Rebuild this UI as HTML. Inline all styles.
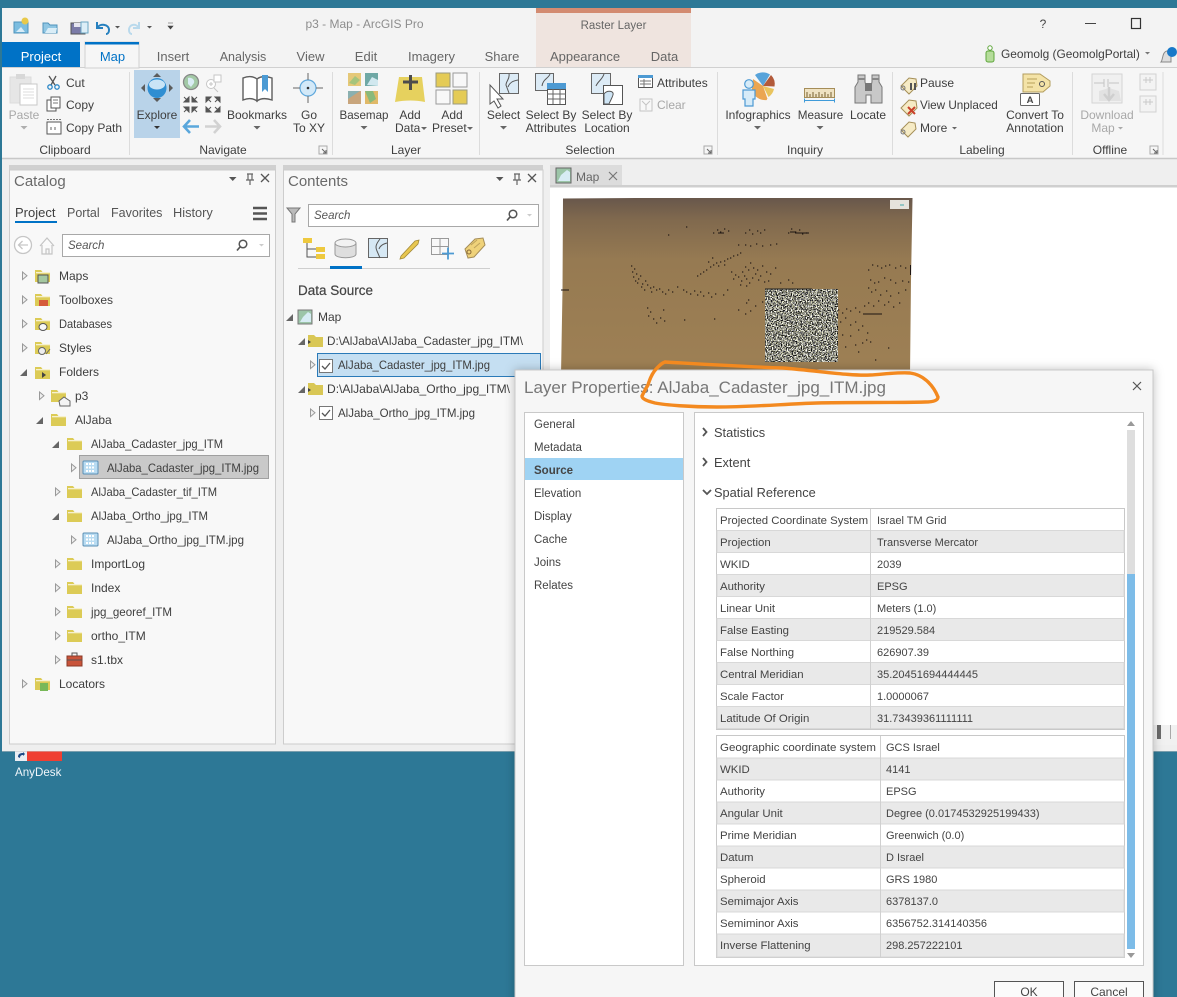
<!DOCTYPE html>
<html lang="en"><head><meta charset="utf-8"><title>p3 - Map - ArcGIS Pro</title>
<style>
html,body{margin:0;padding:0;background:#2d7896;width:1177px;height:997px;overflow:hidden}
svg{display:block}
text{font-family:"Liberation Sans",sans-serif;font-size:12px;fill:#3e3e3e;white-space:pre}
.c{text-anchor:middle}
.g{fill:#a8a8a8}
.tab{font-size:13px;fill:#666}
.h{font-size:15px;fill:#6a6a6a}
.t{font-size:11.5px;fill:#444}
.l{font-size:11.4px;fill:#444}
.v{font-size:11px;fill:#444}
.s{font-style:italic;font-size:11.5px;fill:#555}
</style></head><body>
<svg width="1177" height="997" viewBox="0 0 1177 997" xmlns="http://www.w3.org/2000/svg">
<defs>
<filter id="nz" x="0" y="0" width="100%" height="100%" color-interpolation-filters="sRGB"><feTurbulence type="fractalNoise" baseFrequency="0.8" numOctaves="2" seed="4"/><feColorMatrix type="matrix" values="3.2 .5 0 0 -1.3  3.2 .5 0 0 -1.3  2.7 .8 0 0 -1.25  0 0 0 0 1"/></filter>
<filter id="sh" x="-5%" y="-5%" width="110%" height="110%"><feDropShadow dx="0" dy="0" stdDeviation="5" flood-color="#000" flood-opacity=".25"/></filter>
<linearGradient id="mp" x1="0" y1="0" x2="0" y2="1"><stop offset="0" stop-color="#68574b"/><stop offset=".12" stop-color="#80694e"/><stop offset=".35" stop-color="#967a52"/><stop offset="1" stop-color="#9e8054"/></linearGradient>
<g id="fo"><path d="M0 1h6l1.500 2H15V13H0z" fill="#dccb56"/><path d="M1 3h14v1.300H1z" fill="#f6f1cf"/></g>
<path id="ac" d="M.5 0l4.500 3.800-4.500 3.800z" fill="#eee" stroke="#999"/>
<path id="ae" d="M7 0v7H0z" fill="#666"/>
<g id="ck"><rect x=".5" y=".5" width="13" height="13" fill="#fff" stroke="#777"/><path d="M3 7l3 3 5-6" fill="none" stroke="#555" stroke-width="1.300"/></g>
<g id="rs"><rect x="0" y="0" width="15" height="13" rx="1" fill="#b9dcf2" stroke="#5b8fb5"/><path d="M3 3h9M3 6.500h9M3 10h9" stroke="#fff" stroke-width="2" stroke-dasharray="2 1"/></g>
<path id="dn" d="M0 0h7l-3.500 3.500z" fill="#666"/>
<g id="pn"><path d="M0 0h7.500l-3.750 4z" fill="#555" transform="translate(-16 2)"/><path d="M2 -1h6M3 -1v6h4V-1M1 5h8M5 5v5" fill="none" stroke="#666" stroke-width="1.200"/><path d="M16 -1l8 8M24 -1l-8 8" stroke="#555" stroke-width="1.300"/></g>
<g id="dl"><rect x="0" y="0" width="8" height="8" fill="none" stroke="#aaa"/><path d="M3 3l4 4M7 4v3H4" stroke="#666" fill="none"/></g>
</defs>

<!-- window -->
<rect x="0" y="0" width="1177" height="997" fill="#2d7896"/>
<rect x="2" y="8" width="1175" height="743" fill="#f3f3f3"/>
<rect x="2" y="159" width="1175" height="592" fill="#efefef"/>
<rect x="2" y="67" width="1175" height="91" fill="#f6f6f6"/>
<path d="M2 67.500H85M139 67.500H1177" stroke="#d0d0d0"/>
<path d="M2 158.500H1177" stroke="#c8c8c8" stroke-width="1.500"/>

<!-- context tab -->
<rect x="536" y="8" width="155" height="59" fill="#efe4df"/>
<rect x="536" y="8" width="155" height="5" fill="#d38b71"/>
<text x="613.500" y="29" class="c" style="fill:#666;font-size:11.500px">Raster Layer</text>

<!-- QAT -->
<g>
<rect x="14" y="22" width="14" height="11" fill="#7bbde0" stroke="#4f93bb"/><circle cx="25" cy="21" r="3.500" fill="#e8c94a"/><path d="M16 32l5-5 4 5z" fill="#d8ecf7"/>
<path d="M43 23h5l2 2h7v8H43z" fill="#8fc6e3" stroke="#4f93bb"/><path d="M45 33l3-5h9l-1 5z" fill="#d9edf7"/>
<rect x="71" y="23" width="14" height="11" fill="#7b7ba8" stroke="#555"/><rect x="74" y="23" width="7" height="4" fill="#e6e6f0"/><rect x="81" y="22" width="7" height="11" fill="#dceef7" stroke="#6aa5c3"/>
<path d="M97 22v6h6M97 28c3-5 12-4 12 2 0 2-1 4-3 4" fill="none" stroke="#2680bf" stroke-width="2"/>
<path d="M115 26h5l-2.500 2.500z" fill="#555"/>
<path d="M139 22v6h-6M139 28c-3-5-10-4-10 2 0 2 1 4 3 4" fill="none" stroke="#b9d9ec" stroke-width="2"/>
<path d="M147 26h5l-2.500 2.500z" fill="#555"/>
<path d="M168 23h5M168 26h5l-2.500 3z" fill="#444" stroke="#444" stroke-width=".6"/>
</g>
<text x="364.500" y="28" class="c" style="fill:#8d8d8d;font-size:12px">p3 - Map - ArcGIS Pro</text>
<text x="1043" y="28" class="c" style="fill:#444">?</text>
<path d="M1085 23.500h11" stroke="#444"/>
<rect x="1131.500" y="18.500" width="9" height="10" fill="none" stroke="#333" stroke-width="1.200"/>

<!-- tabs -->
<rect x="2" y="42" width="78" height="25" fill="#0072c6"/>
<text x="41" y="61" class="c" style="fill:#fff;font-size:13px">Project</text>
<rect x="85" y="42" width="54" height="26" fill="#f6f6f6" stroke="#d0d0d0"/>
<rect x="85" y="42" width="54" height="2.500" fill="#0072c6"/>
<text x="112.500" y="61" class="c" style="fill:#0072c6;font-size:13px">Map</text>
<text x="173" y="61" class="c tab">Insert</text>
<text x="243" y="61" class="c tab" style="font-size:12.500px">Analysis</text>
<text x="310.500" y="61" class="c tab">View</text>
<text x="366" y="61" class="c tab">Edit</text>
<text x="431.500" y="61" class="c tab">Imagery</text>
<text x="502" y="61" class="c tab">Share</text>
<text x="585" y="61" class="c tab">Appearance</text>
<text x="664.500" y="61" class="c tab">Data</text>
<rect x="986" y="51" width="8" height="11" rx="2" fill="#b5dc9a" stroke="#5fa63c"/><circle cx="990" cy="48" r="2.200" fill="#fff" stroke="#5fa63c"/>
<text x="1001" y="58" style="font-size:11.900px">Geomolg (GeomolgPortal)</text>
<path d="M1145 52h5l-2.500 2.500z" fill="#777"/>
<path d="M1161 62c2-2 1-10 6-11h4v11z" fill="#ddd" stroke="#888"/><circle cx="1172" cy="52" r="5" fill="#1878c8"/>

<!-- ribbon separators -->
<path d="M129.500 72V155M332.500 72V155M479.500 72V155M717.500 72V155M892.500 72V155M1072.500 72V155M1163 72V155" stroke="#dcdcdc"/>
<text x="65" y="154" class="c">Clipboard</text>
<text x="223" y="154" class="c">Navigate</text>
<text x="406" y="154" class="c">Layer</text>
<text x="590" y="154" class="c">Selection</text>
<text x="805" y="154" class="c">Inquiry</text>
<text x="982" y="154" class="c">Labeling</text>
<text x="1110" y="154" class="c">Offline</text>
<use href="#dl" x="319" y="146"/><use href="#dl" x="704" y="146"/><use href="#dl" x="1150" y="146"/>

<!-- Clipboard -->
<rect x="10" y="77" width="21" height="26" fill="#e6e6e6" stroke="#dcdcdc"/><rect x="16" y="74" width="9" height="5" fill="#d8d8d8"/>
<rect x="20" y="84" width="17" height="21" fill="#fff" stroke="#c8c8c8"/><path d="M23 89h11M23 92h11M23 95h11M23 98h11" stroke="#ddd"/>
<text x="24" y="119" class="c g">Paste</text><use href="#dn" x="20.500" y="126" opacity=".5"/>
<path d="M49 76l6 9M56 76l-5 9" stroke="#555" stroke-width="1.300"/><circle cx="50" cy="87" r="2.200" fill="none" stroke="#2b87c6" stroke-width="1.300"/><circle cx="57" cy="87" r="2.200" fill="none" stroke="#2b87c6" stroke-width="1.300"/>
<text x="66" y="87">Cut</text>
<rect x="47" y="100" width="9" height="11" fill="#fff" stroke="#555"/><rect x="51" y="97" width="9" height="11" fill="#fff" stroke="#555"/><path d="M53 100h5M53 103h5" stroke="#777"/>
<text x="66" y="109">Copy</text>
<rect x="47" y="122" width="14" height="12" fill="#fff" stroke="#555"/><path d="M47 119.500h14" stroke="#777" stroke-dasharray="2 1"/><path d="M51 130v-3M55 130v-3" stroke="#666"/>
<text x="66" y="132">Copy Path</text>

<!-- Navigate -->
<rect x="134" y="70" width="46" height="68" fill="#b9d3e9"/>
<path d="M157 73l4 4h-8zM157 102l-4-4h8zM141 88l4-4v8zM173 88l-4-4v8z" fill="#5c5c5c"/>
<ellipse cx="157" cy="88" rx="9.500" ry="10" fill="#2f8ed2"/><ellipse cx="157" cy="84.500" rx="8" ry="5" fill="#c9e4f6"/>
<text x="157" y="119" class="c">Explore</text><path d="M154 126h6l-3 3z" fill="#333"/>
<circle cx="191" cy="82" r="7.500" fill="#a3c9a6" stroke="#888" stroke-width="1.300"/><path d="M188 78c4-1 7 2 6 5l-3 4-3-3z" fill="#d9ecf4"/>
<circle cx="211" cy="84" r="4.500" fill="#fff" stroke="#c6c6c6"/><path d="M214 88l4 4M209 84h4M211 82v4" stroke="#c6c6c6"/><rect x="214" y="75" width="7" height="7" fill="#fff" stroke="#c6c6c6"/>
<path d="M184 97l3 3M189 102h-5l5-5zM197 97l-3 3M192 102v-5l5 5zM184 112l3-3M189 107v5l-5-5zM197 112l-3-3M192 107h5l-5 5z" stroke="#555" fill="#555"/>
<path d="M206 97l5 0-5 5zM211 102l-3-3M220 97h-5l5 5zM215 102l3-3M206 112h5l-5-5zM211 107l-3 3M220 112h-5l5-5zM215 107l3 3" stroke="#555" fill="#555"/>
<path d="M199 126.500h-14M190 120l-6 6.500 6 6.500" fill="none" stroke="#5aa7dc" stroke-width="2.600"/>
<path d="M205 126.500h14M214 120l6 6.500-6 6.500" fill="none" stroke="#d2d2d2" stroke-width="2.600"/>
<path d="M243 78c5-2 10-2 14 1v22c-4-3-9-3-14-1zM257 79c4-3 9-3 15-1v22c-6-2-11-2-15 1z" fill="#fff" stroke="#5e5e5e" stroke-width="1.400"/>
<path d="M262 75h6v17l-3-3-3 3z" fill="#4c9bd4"/>
<text x="257" y="119" class="c">Bookmarks</text><use href="#dn" x="253.500" y="126"/>
<circle cx="308" cy="88" r="8" fill="#d3e9f8" stroke="#5fa8dc" stroke-width="1.200"/><circle cx="308" cy="88" r="1.300" fill="#333"/>
<path d="M308 73v7M308 96v7M293 88h7M316 88h7" stroke="#666"/>
<text x="309" y="119" class="c">Go</text><text x="309" y="132" class="c">To XY</text>

<!-- Layer -->
<rect x="348" y="73" width="13" height="13" fill="#e5c878"/><path d="M349 83l6-7 5 4-5 5z" fill="#a5c47c"/>
<rect x="365" y="73" width="13" height="13" fill="#6fa8a5"/><path d="M367 85l5-8 6 3v6z" fill="#d1e8ef"/>
<rect x="348" y="91" width="13" height="13" fill="#c8a57c"/><path d="M348 91h12l-12 8z" fill="#8ab0b0"/>
<rect x="365" y="91" width="13" height="13" fill="#e0b968"/><path d="M365 91h8l3 8-6 4z" fill="#89ba7c"/>
<text x="364" y="119" class="c" style="font-size:11.600px">Basemap</text><use href="#dn" x="360.500" y="126"/>
<path d="M399 77h23l3 25c-9-2-20-2-30 0z" fill="#e6d15e"/><path d="M410.500 75v15M403 82h15" stroke="#4c4c4c" stroke-width="3"/>
<text x="410" y="119" class="c">Add</text><text x="395" y="132">Data</text><path d="M421 127h6l-3 3z" fill="#666"/>
<rect x="436" y="73" width="14" height="14" fill="#e4cb56" stroke="#9a9a80"/><rect x="453" y="73" width="14" height="14" fill="#f8f8f8" stroke="#9a9a9a"/>
<rect x="436" y="90" width="14" height="14" fill="#f8f8f8" stroke="#9a9a9a"/><rect x="453" y="90" width="14" height="14" fill="#e4cb56" stroke="#9a9a80"/>
<text x="452" y="119" class="c">Add</text><text x="432" y="132">Preset</text><path d="M467 127h6l-3 3z" fill="#666"/>

<!-- Selection -->
<rect x="499.500" y="73.500" width="19" height="20" fill="#dcebf6" stroke="#666"/><path d="M509 74c1 5-3 7-3 11l3 8M518 80c-5 1-8 2-10 7" fill="none" stroke="#555"/>
<path d="M490 85v19l4-3 4 7 3-2-4-7h6z" fill="#fff" stroke="#555"/>
<text x="503.500" y="119" class="c">Select</text><use href="#dn" x="500" y="126"/>
<rect x="535.500" y="73.500" width="18" height="17" fill="#dcebf6" stroke="#666"/><path d="M550 74c-2 5-7 5-8 12" fill="none" stroke="#555"/>
<rect x="547" y="83" width="19" height="6" fill="#4d9ad3"/><rect x="547.500" y="89.500" width="18" height="15" fill="#fff" stroke="#555"/><path d="M547 94h19M547 99h19M553 89v15M560 89v15" stroke="#666"/>
<text x="551" y="119" class="c">Select By</text><text x="551" y="132" class="c">Attributes</text>
<rect x="591.500" y="73.500" width="19" height="20" fill="#dcebf6" stroke="#666"/><path d="M604 74c-2 6-6 7-8 12" fill="none" stroke="#555"/>
<rect x="603.500" y="85.500" width="19" height="19" fill="#fff" stroke="#555"/><path d="M604 94c3-4 8-3 9-1s-2 6-4 11h-5z" fill="#cfe5f5" stroke="#555"/>
<text x="607" y="119" class="c">Select By</text><text x="607" y="132" class="c">Location</text>
<rect x="638.500" y="75.500" width="14" height="12" fill="#fff" stroke="#555"/><rect x="638" y="75" width="15" height="3" fill="#4d9ad3"/><path d="M640 81h11M640 84h11M644 79v8" stroke="#777"/>
<text x="657" y="87">Attributes</text>
<rect x="640" y="99" width="12" height="12" fill="#f8f8f8" stroke="#c4c4c4"/><path d="M642 101l4 4v5M650 101l-4 4" stroke="#c4c4c4" fill="none"/>
<text x="657" y="109" class="g">Clear</text>

<!-- Inquiry -->
<path d="M763 86L755 75A13 13 0 0 1 770 74.500z" fill="#57a3da"/>
<path d="M763 86L771 75A13 13 0 0 1 774.500 86.500z" fill="#b25a3a"/>
<path d="M763 86L774 89A13 13 0 0 1 768.500 97z" fill="#e9c45e"/>
<path d="M763 86L767.500 99A13 13 0 0 1 753 81z" fill="#eba652"/>
<path d="M753 79L763 86 767 100C760 101 753 96 752 90z" fill="#eba652"/>
<circle cx="749" cy="84" r="4.300" fill="#d6ebf8" stroke="#4d9ad3" stroke-width="1.200"/><path d="M743 90h12v9h-2v7h-8v-7h-2z" fill="#d6ebf8" stroke="#4d9ad3" stroke-width="1.200"/>
<text x="758" y="119" class="c">Infographics</text><use href="#dn" x="754" y="126"/>
<rect x="804.500" y="88.500" width="30" height="9" fill="#efe2c2" stroke="#a58d58"/><path d="M807 97v-5M810 97v-3M813 97v-5M816 97v-3M819 97v-5M822 97v-3M825 97v-5M828 97v-3M831 97v-5" stroke="#776030"/>
<path d="M804 100.500h31M804.500 98.500v4M834.500 98.500v4" stroke="#3f9bd9"/>
<text x="820.500" y="119" class="c" style="font-size:11.700px">Measure</text><use href="#dn" x="816.500" y="126"/>
<path d="M858 75h7v7l1 4v3h5v-3l1-4v-7h7v7l3 5v16h-11v-8h-5v8h-11V87l3-5z" fill="#c8c8c8" stroke="#777"/><rect x="865" y="83" width="7" height="8" fill="#777"/><path d="M858 79h7M872 79h7" stroke="#888" stroke-width="2"/>
<text x="868" y="119" class="c">Locate</text>

<!-- Labeling -->
<path d="M901 86l8-8 7 1 1 7-8 8z" fill="#f6ebc5" stroke="#a58f58"/><circle cx="903" cy="88" r="2" fill="none" stroke="#777"/>
<path d="M911 83v7M915 83v7" stroke="#555" stroke-width="2"/>
<text x="920" y="87">Pause</text>
<path d="M901 108l8-8 7 1 1 7-8 8z" fill="#f6ebc5" stroke="#a58f58"/><path d="M908 107l7 7M915 107l-7 7" stroke="#c9402a" stroke-width="2"/>
<text x="920" y="109" style="font-size:11.700px">View Unplaced</text>
<path d="M901 130l8-8 6 1 1 6-8 8z" fill="#f6ebc5" stroke="#a58f58"/><circle cx="903" cy="132" r="2" fill="none" stroke="#777"/>
<text x="920" y="132">More</text><path d="M952 127h5l-2.500 2.500z" fill="#666"/>
<path d="M1023 74h17l10 7v5l-7 6h-20z" fill="#f4e3a7" stroke="#b39d5f"/><path d="M1027 79h10M1027 83h8M1027 87h6" stroke="#b8a259"/><circle cx="1042" cy="84" r="2.500" fill="none" stroke="#555"/>
<rect x="1020.500" y="93.500" width="19" height="12" rx="1" fill="#fff" stroke="#666"/><text x="1030" y="103" class="c" style="font-size:9.500px;font-weight:bold;fill:#444">A</text>
<text x="1035" y="119" class="c">Convert To</text><text x="1035" y="132" class="c">Annotation</text>

<!-- Offline -->
<rect x="1092" y="74" width="30" height="29" fill="#f0f0f0" stroke="#d4d4d4"/><path d="M1094 83h10M1109 83h10M1104 79v8M1108 79v8" stroke="#c4c4c4"/><path d="M1099 91l10-3 10 3 2 10h-22z" fill="#e2e2e2"/><path d="M1109 87v12M1104 94l5 6 5-6" stroke="#cfcfcf" stroke-width="2.500" fill="none"/>
<text x="1107" y="119" class="c g">Download</text><text x="1103" y="132" class="c g">Map</text><path d="M1118 127h5l-2.500 2.500z" fill="#aaa"/>
<rect x="1140" y="74" width="16" height="16" fill="#f3f3f3" stroke="#d2d2d2"/><rect x="1140" y="96" width="16" height="16" fill="#f3f3f3" stroke="#d2d2d2"/>
<path d="M1143 80h10M1146 77v6M1150 77v6M1143 102h10M1146 99v6M1150 99v6" stroke="#cacaca"/>

<!-- Catalog pane -->
<rect x="9" y="165" width="267" height="5" fill="#d0d0d0"/>
<rect x="9.500" y="170" width="266" height="574" fill="#f8f8f8" stroke="#cdcdcd"/>
<text x="14" y="186" class="h">Catalog</text>
<use href="#pn" x="245" y="175"/>
<text x="15" y="217" style="font-size:13px">Project</text><rect x="15" y="221" width="42" height="2" fill="#0072c6"/>
<text x="67" y="217" style="font-size:12.500px;fill:#555">Portal</text>
<text x="111" y="217" style="font-size:12.500px;fill:#555">Favorites</text>
<text x="173" y="217" style="font-size:12.800px;fill:#555">History</text>
<path d="M253 208h14M253 213.500h14M253 219h14" stroke="#555" stroke-width="2.500"/>
<circle cx="23" cy="245" r="8.500" fill="#fff" stroke="#c6c6c6" stroke-width="1.300"/><path d="M28 245h-9M22.500 241l-4 4 4 4" fill="none" stroke="#c6c6c6" stroke-width="1.300"/>
<path d="M40 246l7-8 7 8M42 245v9h10v-9M46 254v-5h3v5" fill="#fafafa" stroke="#c4c4c4" stroke-width="1.200"/>
<rect x="62.500" y="234.500" width="207" height="22" fill="#fff" stroke="#a8a8a8"/>
<text x="68" y="249" class="s">Search</text>
<circle cx="243" cy="244" r="3.800" fill="none" stroke="#555" stroke-width="1.500"/><path d="M240 247l-3 3.500" stroke="#555" stroke-width="1.700"/><path d="M259 244h5l-2.500 2.500z" fill="#ccc"/>

<!-- catalog tree -->
<use href="#ac" x="22" y="272"/><use href="#fo" x="35" y="269"/><rect x="38" y="275" width="10" height="8" fill="#a5c8a0" stroke="#555"/><text x="59" y="280">Maps</text>
<use href="#ac" x="22" y="296"/><use href="#fo" x="35" y="293"/><rect x="39" y="300" width="9" height="6" fill="#d55a3a"/><text x="59" y="304">Toolboxes</text>
<use href="#ac" x="22" y="320"/><use href="#fo" x="35" y="317"/><ellipse cx="43" cy="327" rx="4" ry="3.500" fill="#f8f8f8" stroke="#555"/><text x="59" y="328" textLength="53" lengthAdjust="spacingAndGlyphs">Databases</text>
<use href="#ac" x="22" y="344"/><use href="#fo" x="35" y="341"/><circle cx="42" cy="351" r="3.500" fill="#eee" stroke="#666"/><path d="M46 354l4-5" stroke="#666"/><text x="59" y="352">Styles</text>
<use href="#ae" x="20" y="369"/><use href="#fo" x="35" y="366"/><path d="M42 372l4 3-4 3z" fill="#444"/><text x="59" y="376">Folders</text>
<use href="#ac" x="39" y="392"/><use href="#fo" x="51" y="389"/><path d="M59 401l5-4 6 4v5H60z" fill="#f4f4f4" stroke="#666"/><text x="75" y="400">p3</text>
<use href="#ae" x="36" y="417"/><use href="#fo" x="51" y="413"/><text x="75" y="424">AlJaba</text>
<use href="#ae" x="52" y="441"/><use href="#fo" x="67" y="437"/><text x="91" y="448" textLength="132" lengthAdjust="spacingAndGlyphs">AlJaba_Cadaster_jpg_ITM</text>
<rect x="79.500" y="455.500" width="189" height="23" fill="#c9c9c9" stroke="#a0a0a0"/>
<use href="#ac" x="71" y="464"/><use href="#rs" x="83" y="461"/><text x="107" y="472" textLength="152" lengthAdjust="spacingAndGlyphs">AlJaba_Cadaster_jpg_ITM.jpg</text>
<use href="#ac" x="55" y="488"/><use href="#fo" x="67" y="485"/><text x="91" y="496" textLength="126" lengthAdjust="spacingAndGlyphs">AlJaba_Cadaster_tif_ITM</text>
<use href="#ae" x="52" y="513"/><use href="#fo" x="67" y="509"/><text x="91" y="520" textLength="117" lengthAdjust="spacingAndGlyphs">AlJaba_Ortho_jpg_ITM</text>
<use href="#ac" x="71" y="536"/><use href="#rs" x="83" y="533"/><text x="107" y="544" textLength="137" lengthAdjust="spacingAndGlyphs">AlJaba_Ortho_jpg_ITM.jpg</text>
<use href="#ac" x="55" y="560"/><use href="#fo" x="67" y="557"/><text x="91" y="568">ImportLog</text>
<use href="#ac" x="55" y="584"/><use href="#fo" x="67" y="581"/><text x="91" y="592">Index</text>
<use href="#ac" x="55" y="608"/><use href="#fo" x="67" y="605"/><text x="91" y="616" textLength="81" lengthAdjust="spacingAndGlyphs">jpg_georef_ITM</text>
<use href="#ac" x="55" y="632"/><use href="#fo" x="67" y="629"/><text x="91" y="640">ortho_ITM</text>
<use href="#ac" x="55" y="656"/><rect x="67" y="656" width="15" height="10" fill="#c9543a" stroke="#8a3a28"/><path d="M72 656v-3h5v3M67 660h15" stroke="#555" fill="none"/><text x="91" y="664">s1.tbx</text>
<use href="#ac" x="22" y="680"/><use href="#fo" x="35" y="677"/><rect x="40" y="683" width="8" height="8" fill="#78b858"/><text x="59" y="688">Locators</text>

<!-- Contents pane -->
<rect x="283" y="165" width="260" height="5" fill="#d0d0d0"/>
<rect x="283.500" y="170" width="259.500" height="574" fill="#f8f8f8" stroke="#cdcdcd"/>
<text x="288" y="186" class="h">Contents</text>
<use href="#pn" x="512" y="175"/>
<path d="M287 208h13l-5 6v8h-3v-8z" fill="#bbb" stroke="#777"/>
<rect x="308.500" y="204.500" width="230" height="22" fill="#fff" stroke="#a8a8a8"/>
<text x="314" y="219" class="s">Search</text>
<circle cx="513" cy="214" r="3.800" fill="none" stroke="#555" stroke-width="1.500"/><path d="M510 217l-3 3.500" stroke="#555" stroke-width="1.700"/><path d="M527 214h5l-2.500 2.500z" fill="#ccc"/>
<rect x="303" y="238" width="9" height="5" fill="#eec93f"/><rect x="316" y="247" width="9" height="5" fill="#eec93f"/><rect x="316" y="254" width="9" height="5" fill="#eec93f"/><path d="M307 243v14h9M307 249h9" fill="none" stroke="#555"/>
<path d="M335 243v11c0 5 21 5 21 0v-11" fill="#dedede" stroke="#999"/><ellipse cx="345.500" cy="243" rx="10.500" ry="4" fill="#f2f2f2" stroke="#999"/>
<rect x="368.500" y="238.500" width="19" height="19" fill="#d6e8f4" stroke="#666"/><path d="M380 239c-4 5-5 8-3 12l3 7M387 243c-4 1-7 3-8 6" fill="none" stroke="#555"/>
<path d="M401 256l14-15 4-1-1 4-14 14-4 1z" fill="#e8c750" stroke="#a38a3a" stroke-width=".8"/>
<path d="M431.500 238.500h17v16h-17zM431.500 246.500h17M440 238.500v16" fill="none" stroke="#999"/><path d="M442 253.500h12M448 247.500v12" stroke="#4d9ad3" stroke-width="1.800"/>
<path d="M465 249l10-10 8-1 2 7-11 12-6 1z" fill="#efd27a" stroke="#a58d58"/><circle cx="469" cy="252" r="2" fill="none" stroke="#8a6a3a"/><path d="M471 245l6-5M474 248l6-5" stroke="#bfa25c"/>
<path d="M298 268.500H490" stroke="#cfcfcf"/><rect x="330" y="266" width="32" height="3" fill="#0072c6"/>
<text x="298" y="295" style="font-size:13.500px;fill:#444;stroke:#444;stroke-width:.2">Data Source</text>
<use href="#ae" x="286" y="314"/><rect x="298" y="310" width="14" height="14" fill="#9cc5a8" stroke="#777"/><path d="M300 322l3-5 5-5 3 2v8z" fill="#d7ecf4"/><text x="318" y="321">Map</text>
<use href="#ae" x="298" y="338"/><path d="M308 335h6l2 2h7v10h-15z" fill="#d9c755"/><path d="M308 340l3 2-3 2z" fill="#444"/><text x="327" y="345" textLength="196" lengthAdjust="spacingAndGlyphs">D:\AlJaba\AlJaba_Cadaster_jpg_ITM\</text>
<rect x="317.500" y="353.500" width="223" height="23" fill="#c5dff2" stroke="#2b7ab8"/>
<use href="#ac" x="310" y="361"/><use href="#ck" x="319" y="359"/><text x="338" y="369" textLength="152" lengthAdjust="spacingAndGlyphs">AlJaba_Cadaster_jpg_ITM.jpg</text>
<use href="#ae" x="298" y="386"/><path d="M308 383h6l2 2h7v10h-15z" fill="#d9c755"/><path d="M308 388l3 2-3 2z" fill="#444"/><text x="327" y="393" textLength="183" lengthAdjust="spacingAndGlyphs">D:\AlJaba\AlJaba_Ortho_jpg_ITM\</text>
<use href="#ac" x="310" y="409"/><use href="#ck" x="319" y="406"/><text x="338" y="417" textLength="137" lengthAdjust="spacingAndGlyphs">AlJaba_Ortho_jpg_ITM.jpg</text>

<!-- Map view -->
<rect x="550" y="165" width="72" height="21" fill="#dcdcdc"/>
<rect x="556" y="168" width="15" height="15" fill="#9cc5a8" stroke="#666"/><path d="M558 181l3-6 6-5 3 2v9z" fill="#d7ecf4"/>
<text x="576" y="181" style="font-size:12px;fill:#666">Map</text>
<path d="M609 172l8 8M617 172l-8 8" stroke="#777" stroke-width="1.200"/>
<rect x="550" y="186" width="627" height="540" fill="#fff"/>
<rect x="550" y="185" width="627" height="2.500" fill="#cfcfcf"/>
<rect x="550" y="725" width="627" height="20" fill="#f1f1f1"/>
<path d="M563 198.500L641 198L912.500 198L911 280L910 375H561L562.500 290z" fill="url(#mp)"/>
<rect x="890" y="200" width="19" height="9" fill="#e6e3dc"/><path d="M900 205h4" stroke="#4aa"/>
<path d="M561 290h8M863 314h19M910.500 265v10M718 233h6M790 232h6M795 233h14" stroke="#1d1512" fill="none"/>
<path fill="none" stroke="#1d1512" stroke-width="1.300" opacity=".9" d="M631 266h1.300M634 269h1.300M632 272h1.300M636 274h1.300M633 277h1.300M638 279h1.300M635 281h1.300M640 276h1.300M637 283h1.300M642 284h1.300M645 281h1.300M641 287h1.300M647 285h1.300M650 288h1.300M644 290h1.300M653 287h1.300M656 290h1.300M659 289h1.300M662 292h1.300M651 292h1.300M665 294h1.300M668 290h1.300M697 276h1.300M700 274h1.300M703 272h1.300M706 270h1.300M710 267h1.300M713 265h1.300M716 263h1.300M720 262h1.300M724 261h1.300M727 259h1.300M730 258h1.300M733 256h1.300M737 255h1.300M740 253h1.300M708 262h1.300M712 258h1.300M718 266h1.300M724 265h1.300M731 272h1.300M735 275h1.300M733 279h1.300M738 277h1.300M741 281h1.300M744 276h1.300M746 279h1.300M749 283h1.300M752 278h1.300M755 274h1.300M758 280h1.300M742 272h1.300M748 270h1.300M753 268h1.300M757 270h1.300M762 266h1.300M766 272h1.300M760 276h1.300M770 274h1.300M775 268h1.300M764 282h1.300M740 285h1.300M746 286h1.300M768 281h1.300M780 283h1.300M788 280h1.300M792 283h1.300M745 267h1.300M750 263h1.300M683 290h1.300M686 292h1.300M690 294h1.300M694 291h1.300M697 295h1.300M700 292h1.300M703 296h1.300M708 293h1.300M711 297h1.300M715 294h1.300M677 287h1.300M672 292h1.300M723 295h1.300M727 290h1.300M713 233h1.300M717 230h1.300M720 232h1.300M724 229h1.300M728 231h1.300M745 233h1.300M749 230h1.300M752 234h1.300M757 231h1.300M760 233h1.300M764 230h1.300M788 233h1.300M791 229h1.300M795 232h1.300M799 230h1.300M802 234h1.300M806 233h1.300M738 245h1.300M745 245h1.300M750 246h1.300M756 244h1.300M762 246h1.300M770 245h1.300M776 244h1.300M686 227h1.300M668 235h1.300M647 308h1.300M650 312h1.300M648 316h1.300M653 319h1.300M656 323h1.300M660 318h1.300M664 321h1.300M663 310h1.300M684 320h1.300M714 319h1.300M750 311h1.300M746 303h1.300M738 310h1.300M745 314h1.300M755 306h1.300M748 300h1.300M762 302h1.300M868 270h1.300M872 265h1.300M877 266h1.300M881 268h1.300M885 266h1.300M889 265h1.300M895 268h1.300M900 266h1.300M905 268h1.300M870 280h1.300M874 283h1.300M868 288h1.300M878 282h1.300M884 278h1.300M890 280h1.300M895 283h1.300M902 281h1.300M908 282h1.300M871 292h1.300M875 290h1.300M880 295h1.300M886 291h1.300M890 296h1.300M898 293h1.300M905 290h1.300M868 303h1.300M873 306h1.300M878 301h1.300M884 305h1.300M888 302h1.300M893 307h1.300M899 303h1.300M838 310h1.300M842 313h1.300M846 309h1.300M850 311h1.300M855 308h1.300M859 312h1.300M864 306h1.300M845 318h1.300M850 325h1.300M855 322h1.300M858 330h1.300M862 326h1.300M867 333h1.300M850 336h1.300M855 345h1.300M862 343h1.300M866 340h1.300M870 342h1.300M888 348h1.300M842 335h1.300M840 322h1.300M875 360h1.300M858 352h1.300M845 347h1.300"/>
<svg x="765" y="289" width="73" height="73"><rect width="73" height="73" filter="url(#nz)"/></svg>
<path d="M765 289h47" stroke="#222" stroke-width="1"/>

<!-- AnyDesk -->
<rect x="15" y="751" width="12" height="10" fill="#e9edf3"/><path d="M18 757c0-3 2-4 5-4v-1l2 2-2 2v-1c-2 0-3 1-3 3z" fill="#1d4a86"/>
<rect x="27" y="751" width="35" height="10" fill="#ef3f32"/>
<text x="15" y="776" style="fill:#f0f6fa;font-size:11.600px">AnyDesk</text>

<!-- status marks -->
<rect x="1157" y="725" width="4" height="14" fill="#6a6a6a"/><path d="M1170.500 725v14" stroke="#a8a8a8"/>
<path d="M2 751.500H1177" stroke="#c4c4c4" opacity=".5"/>

<!-- Dialog -->
<rect x="515" y="370" width="638" height="640" fill="#f6f6f6" stroke="#c9c9c9" filter="url(#sh)"/>
<text x="524" y="393" style="font-size:17px;fill:#777">Layer Properties: AlJaba_Cadaster_jpg_ITM.jpg</text>
<path d="M1133 382l8 8M1141 382l-8 8" stroke="#555" stroke-width="1.200"/>
<rect x="524.500" y="412.500" width="159" height="553" fill="#fff" stroke="#c9c9c9"/>
<rect x="525" y="458" width="158" height="22" fill="#9fd3f3"/>
<text x="534" y="428" class="t">General</text>
<text x="534" y="451" class="t">Metadata</text>
<text x="534" y="474" class="t" style="font-weight:bold">Source</text>
<text x="534" y="497" class="t">Elevation</text>
<text x="534" y="520" class="t">Display</text>
<text x="534" y="543" class="t">Cache</text>
<text x="534" y="566" class="t">Joins</text>
<text x="534" y="589" class="t">Relates</text>
<rect x="694.500" y="412.500" width="449" height="553" fill="#fff" stroke="#c9c9c9"/>
<path d="M703 428l3.500 4-3.500 4M703 458l3.500 4-3.500 4" fill="none" stroke="#555" stroke-width="1.800"/>
<path d="M703 490l4 4 4-4" fill="none" stroke="#555" stroke-width="1.800"/>
<text x="714" y="437" style="font-size:12.800px;fill:#444">Statistics</text>
<text x="714" y="467" style="font-size:12.800px;fill:#444">Extent</text>
<text x="714" y="497" style="font-size:12.800px;fill:#444">Spatial Reference</text>

<!-- scrollbar -->
<rect x="1127" y="430" width="8" height="519" fill="#dedede"/>
<rect x="1127" y="574" width="8" height="375" fill="#7dbce8"/>
<path d="M1131 421l4 5h-8zM1131 958l-4-5h8z" fill="#999"/>

<!-- table 1 -->
<rect x="716.500" y="508.500" width="408" height="221" fill="#fff" stroke="#c8c8c8"/>
<g fill="#e9e9e9" stroke="#d8d8d8"><rect x="717" y="530.500" width="407" height="22"/><rect x="717" y="574.500" width="407" height="22"/><rect x="717" y="618.500" width="407" height="22"/><rect x="717" y="662.500" width="407" height="22"/><rect x="717" y="706.500" width="407" height="22"/></g>
<path d="M870.500 509V729" stroke="#d0d0d0"/>
<text x="720" y="524" class="l">Projected Coordinate System</text><text x="877" y="524" class="v">Israel TM Grid</text>
<text x="720" y="546" class="l">Projection</text><text x="877" y="546" class="v">Transverse Mercator</text>
<text x="720" y="568" class="l">WKID</text><text x="877" y="568" class="v">2039</text>
<text x="720" y="590" class="l">Authority</text><text x="877" y="590" class="v">EPSG</text>
<text x="720" y="612" class="l">Linear Unit</text><text x="877" y="612" class="v">Meters (1.0)</text>
<text x="720" y="634" class="l">False Easting</text><text x="877" y="634" class="v">219529.584</text>
<text x="720" y="656" class="l">False Northing</text><text x="877" y="656" class="v">626907.39</text>
<text x="720" y="678" class="l">Central Meridian</text><text x="877" y="678" class="v">35.20451694444445</text>
<text x="720" y="700" class="l">Scale Factor</text><text x="877" y="700" class="v">1.0000067</text>
<text x="720" y="722" class="l">Latitude Of Origin</text><text x="877" y="722" class="v">31.73439361111111</text>

<!-- table 2 -->
<rect x="716.500" y="735.500" width="408" height="222" fill="#fff" stroke="#c8c8c8"/>
<g fill="#e9e9e9" stroke="#d8d8d8"><rect x="717" y="758" width="407" height="22"/><rect x="717" y="802" width="407" height="22"/><rect x="717" y="846" width="407" height="22"/><rect x="717" y="890" width="407" height="22"/><rect x="717" y="934" width="407" height="23"/></g>
<path d="M880.500 736V957" stroke="#d0d0d0"/>
<text x="720" y="751" class="l" textLength="156" lengthAdjust="spacingAndGlyphs">Geographic coordinate system</text><text x="886" y="751" class="v">GCS Israel</text>
<text x="720" y="773" class="l">WKID</text><text x="886" y="773" class="v">4141</text>
<text x="720" y="795" class="l">Authority</text><text x="886" y="795" class="v">EPSG</text>
<text x="720" y="817" class="l">Angular Unit</text><text x="886" y="817" class="v">Degree (0.0174532925199433)</text>
<text x="720" y="839" class="l">Prime Meridian</text><text x="886" y="839" class="v">Greenwich (0.0)</text>
<text x="720" y="861" class="l">Datum</text><text x="886" y="861" class="v">D Israel</text>
<text x="720" y="883" class="l">Spheroid</text><text x="886" y="883" class="v">GRS 1980</text>
<text x="720" y="905" class="l">Semimajor Axis</text><text x="886" y="905" class="v">6378137.0</text>
<text x="720" y="927" class="l">Semiminor Axis</text><text x="886" y="927" class="v">6356752.314140356</text>
<text x="720" y="949" class="l">Inverse Flattening</text><text x="886" y="949" class="v">298.257222101</text>

<!-- buttons -->
<rect x="994.500" y="981.500" width="69" height="24" fill="#fbfbfb" stroke="#555"/>
<text x="1029" y="996" class="c" style="fill:#444">OK</text>
<rect x="1074.500" y="981.500" width="69" height="24" fill="#fbfbfb" stroke="#555"/>
<text x="1109" y="996" class="c" style="fill:#444">Cancel</text>

<!-- orange scribble -->
<path d="M665 362C700 364 730 366 783 368C820 371 850 376 870 375C885 374 900 372 910 373C925 375 934 387 938 397C938 401 932 402 925 402C890 403 850 402 817 403C785 404 750 407 717 407C690 407 665 405 655 403C647 401 642 399 642 396C644 392 646 388 648 385C650 378 653 372 657 368C660 365 662 363 665 362" fill="none" stroke="#f3891f" stroke-width="3.400" stroke-linecap="round"/>
</svg>
</body></html>
